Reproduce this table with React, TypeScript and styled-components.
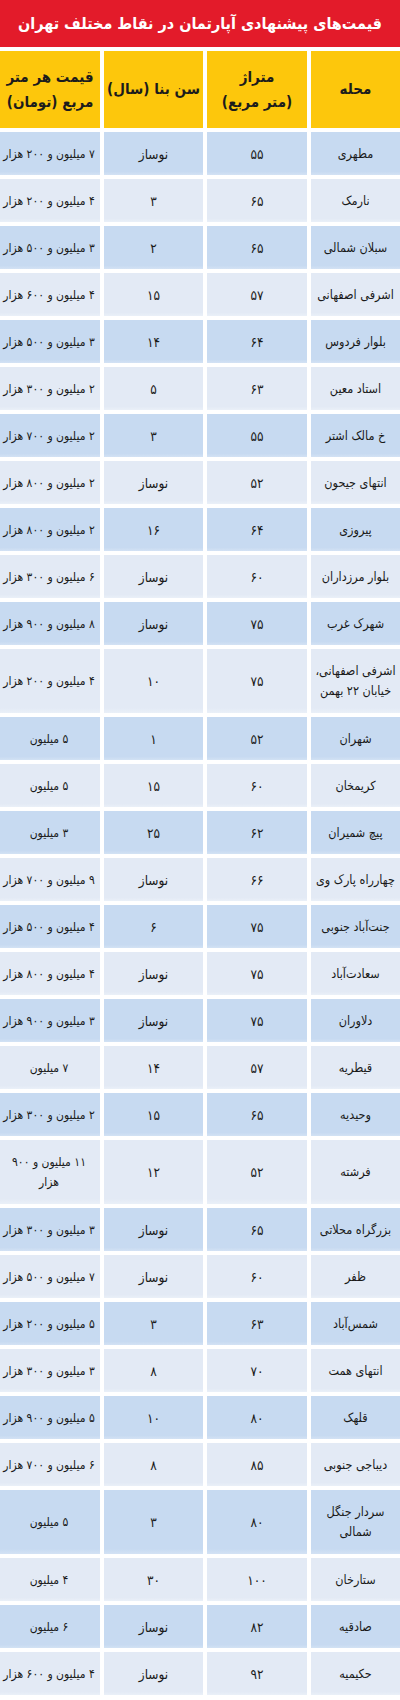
import React from 'react';
import styled, { createGlobalStyle } from 'styled-components';

const GlobalStyle = createGlobalStyle`
    body {
        margin: 0;
        background: #fff;
        font-family: "DejaVu Sans Condensed", "DejaVu Sans", sans-serif;
        font-stretch: condensed;
    }
`;

type RowType = {
    name: React.ReactNode;
    area: string;
    age: string;
    price: React.ReactNode;
    tall?: boolean;
}

const rows: RowType[] = [
    { name: 'مطهری', area: '۵۵', age: 'نوساز', price: '۷ میلیون و ۲۰۰ هزار' },
    { name: 'نارمک', area: '۶۵', age: '۳', price: '۴ میلیون و ۲۰۰ هزار' },
    { name: 'سبلان شمالی', area: '۶۵', age: '۲', price: '۳ میلیون و ۵۰۰ هزار' },
    { name: 'اشرفی اصفهانی', area: '۵۷', age: '۱۵', price: '۴ میلیون و ۶۰۰ هزار' },
    { name: 'بلوار فردوس', area: '۶۴', age: '۱۴', price: '۳ میلیون و ۵۰۰ هزار' },
    { name: 'استاد معین', area: '۶۳', age: '۵', price: '۲ میلیون و ۳۰۰ هزار' },
    { name: 'خ مالک اشتر', area: '۵۵', age: '۳', price: '۲ میلیون و ۷۰۰ هزار' },
    { name: 'انتهای جیحون', area: '۵۲', age: 'نوساز', price: '۲ میلیون و ۸۰۰ هزار' },
    { name: 'پیروزی', area: '۶۴', age: '۱۶', price: '۲ میلیون و ۸۰۰ هزار' },
    { name: 'بلوار مرزداران', area: '۶۰', age: 'نوساز', price: '۶ میلیون و ۳۰۰ هزار' },
    { name: 'شهرک غرب', area: '۷۵', age: 'نوساز', price: '۸ میلیون و ۹۰۰ هزار' },
    { name: <>اشرفی اصفهانی،<br />خیابان ۲۲ بهمن</>, area: '۷۵', age: '۱۰', price: '۴ میلیون و ۲۰۰ هزار', tall: true },
    { name: 'شهران', area: '۵۲', age: '۱', price: '۵ میلیون' },
    { name: 'کریمخان', area: '۶۰', age: '۱۵', price: '۵ میلیون' },
    { name: 'پیچ شمیران', area: '۶۲', age: '۲۵', price: '۳ میلیون' },
    { name: 'چهارراه پارک وی', area: '۶۶', age: 'نوساز', price: '۹ میلیون و ۷۰۰ هزار' },
    { name: 'جنت‌آباد جنوبی', area: '۷۵', age: '۶', price: '۴ میلیون و ۵۰۰ هزار' },
    { name: 'سعادت‌آباد', area: '۷۵', age: 'نوساز', price: '۴ میلیون و ۸۰۰ هزار' },
    { name: 'دلاوران', area: '۷۵', age: 'نوساز', price: '۳ میلیون و ۹۰۰ هزار' },
    { name: 'قیطریه', area: '۵۷', age: '۱۴', price: '۷ میلیون' },
    { name: 'وحیدیه', area: '۶۵', age: '۱۵', price: '۲ میلیون و ۳۰۰ هزار' },
    { name: 'فرشته', area: '۵۲', age: '۱۲', price: <>۱۱ میلیون و ۹۰۰<br />هزار</>, tall: true },
    { name: 'بزرگراه محلاتی', area: '۶۵', age: 'نوساز', price: '۳ میلیون و ۳۰۰ هزار' },
    { name: 'ظفر', area: '۶۰', age: 'نوساز', price: '۷ میلیون و ۵۰۰ هزار' },
    { name: 'شمس‌آباد', area: '۶۳', age: '۳', price: '۵ میلیون و ۲۰۰ هزار' },
    { name: 'انتهای همت', area: '۷۰', age: '۸', price: '۳ میلیون و ۳۰۰ هزار' },
    { name: 'قلهک', area: '۸۰', age: '۱۰', price: '۵ میلیون و ۹۰۰ هزار' },
    { name: 'دیباجی جنوبی', area: '۸۵', age: '۸', price: '۶ میلیون و ۷۰۰ هزار' },
    { name: <>سردار جنگل<br />شمالی</>, area: '۸۰', age: '۳', price: '۵ میلیون', tall: true },
    { name: 'ستارخان', area: '۱۰۰', age: '۳۰', price: '۴ میلیون' },
    { name: 'صادقیه', area: '۸۲', age: 'نوساز', price: '۶ میلیون' },
    { name: 'حکیمیه', area: '۹۲', age: 'نوساز', price: '۴ میلیون و ۶۰۰ هزار' },
];

const Page = styled.div`
    width: 400px;
    direction: rtl;
    display: flex;
    flex-direction: column;
    gap: 4px;
`;

const TitleBar = styled.div`
    height: 47px;
    background: #e31b2a;
    color: #fff;
    display: flex;
    align-items: center;
    justify-content: center;
    font-size: 16px;
    font-weight: bold;
    white-space: nowrap;
    overflow: hidden;
`;

const Grid = styled.div`
    display: grid;
    grid-template-columns: 89px 100px 99px 100px;
    column-gap: 4px;
`;

const HeadCell = styled.div`
    height: 77px;
    background: #fdc70c;
    color: #1c1c1c;
    font-weight: bold;
    font-size: 15px;
    line-height: 25px;
    display: flex;
    align-items: center;
    overflow: hidden;

    span {
        width: 100%;
        text-align: center;
        white-space: nowrap;
    }
`;

const Cell = styled.div<{ $dark: boolean; $tall?: boolean }>`
    height: ${props => props.$tall ? '64px' : '43px'};
    background: ${props => props.$dark
        ? 'linear-gradient(#c7daf1, #c7daf1 92%, #d3e2f4)'
        : 'linear-gradient(#e3eaf5, #e3eaf5 92%, #eaf0f8)'};
    color: #1a1a1a;
    font-size: 13.5px;
    line-height: 20px;
    display: flex;
    align-items: center;
    overflow: hidden;

    span {
        width: 100%;
        text-align: center;
        white-space: nowrap;
    }
`;

const NameCell = styled(Cell)`
    font-size: 12.5px;
`;

const PriceCell = styled(Cell)`
    font-size: 12px;

    span {
        padding-right: 2px;
    }
`;

export default function App() {
    return (
        <>
            <GlobalStyle />
            <Page>
                <TitleBar>قیمت‌های پیشنهادی آپارتمان در نقاط مختلف تهران</TitleBar>
                <Grid>
                    <HeadCell><span>محله</span></HeadCell>
                    <HeadCell><span>متراژ<br />(متر مربع)</span></HeadCell>
                    <HeadCell><span>سن بنا (سال)</span></HeadCell>
                    <HeadCell><span>قیمت هر متر<br />مربع (تومان)</span></HeadCell>
                </Grid>
                {rows.map((row, i) => (
                    <Grid key={i}>
                        <NameCell $dark={i % 2 === 0} $tall={row.tall}><span>{row.name}</span></NameCell>
                        <Cell $dark={i % 2 === 0} $tall={row.tall}><span>{row.area}</span></Cell>
                        <Cell $dark={i % 2 === 0} $tall={row.tall}><span>{row.age}</span></Cell>
                        <PriceCell $dark={i % 2 === 0} $tall={row.tall}><span>{row.price}</span></PriceCell>
                    </Grid>
                ))}
            </Page>
        </>
    );
}
